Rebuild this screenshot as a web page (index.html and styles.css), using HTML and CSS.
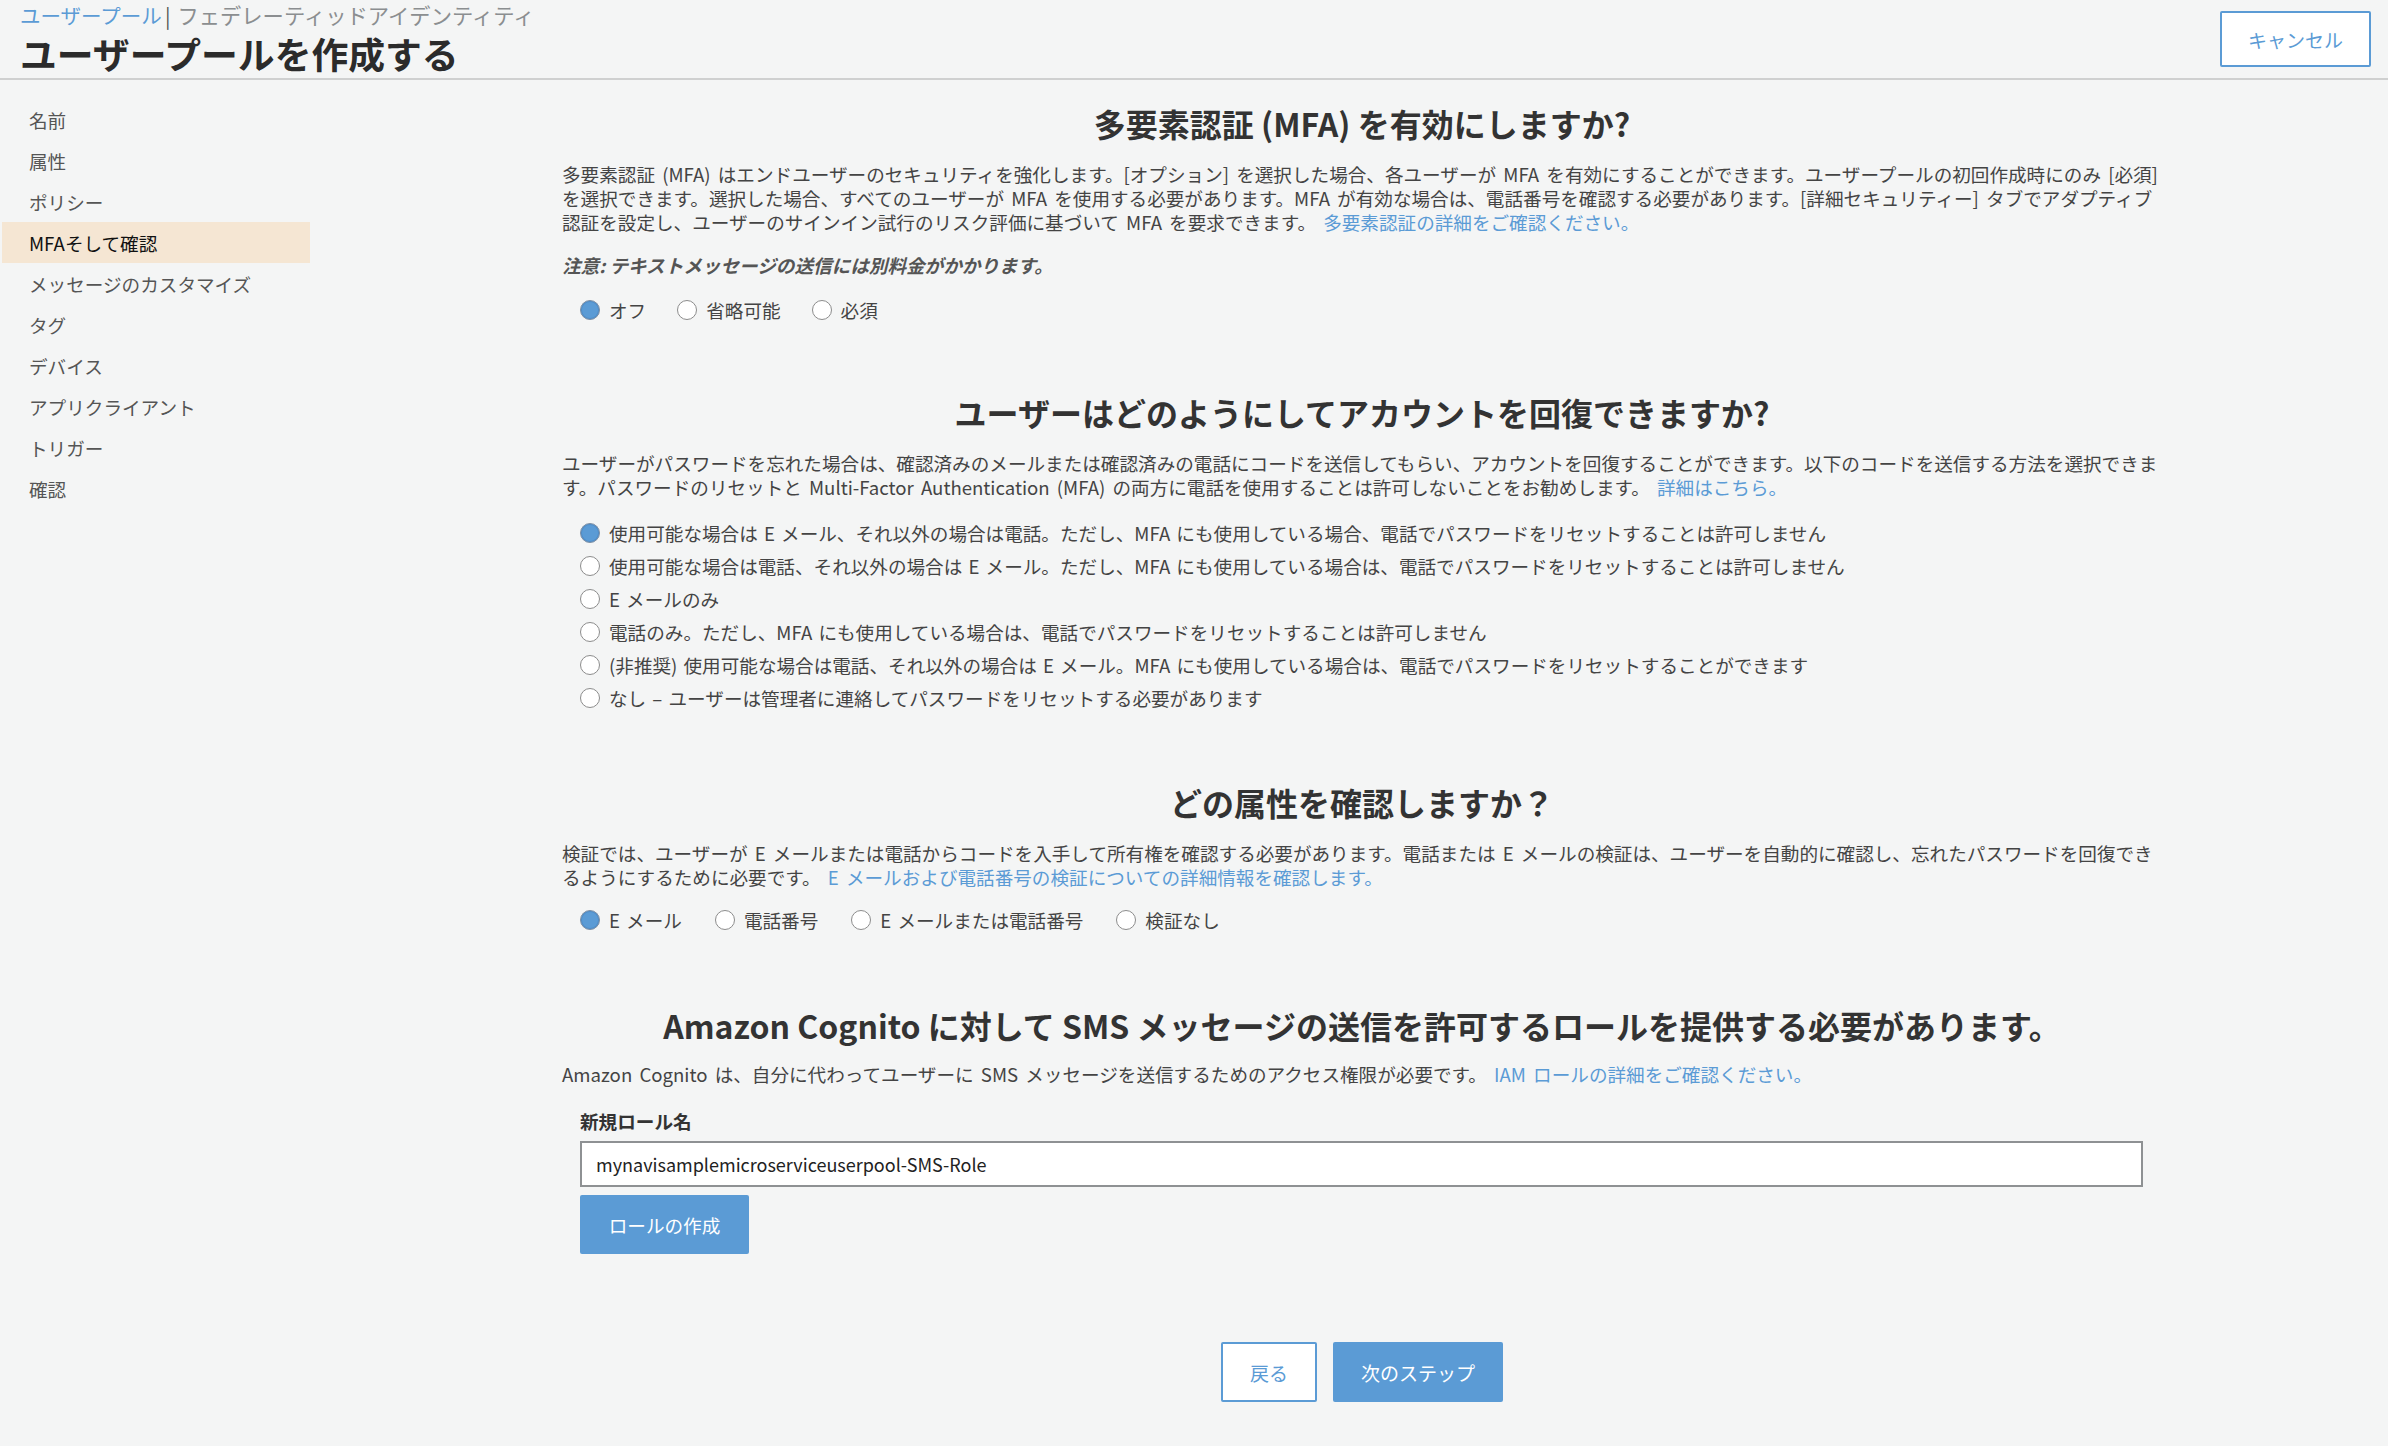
FILE: index.html
```html
<!DOCTYPE html>
<html lang="ja">
<head>
<meta charset="utf-8">
<title>ユーザープールを作成する</title>
<link rel="stylesheet" href="styles.css">
</head>
<body>
<header class="header">
  <div class="head-left">
    <div class="crumbs"><a href="#">ユーザープール</a><span class="sep">|</span><span class="crumb-grey">フェデレーティッドアイデンティティ</span></div>
    <h1 class="title">ユーザープールを作成する</h1>
  </div>
  <button class="cancel">キャンセル</button>
</header>
<div class="layout">
  <nav class="side">
    <a href="#">名前</a>
    <a href="#">属性</a>
    <a href="#">ポリシー</a>
    <a href="#" class="active">MFAそして確認</a>
    <a href="#">メッセージのカスタマイズ</a>
    <a href="#">タグ</a>
    <a href="#">デバイス</a>
    <a href="#">アプリクライアント</a>
    <a href="#">トリガー</a>
    <a href="#">確認</a>
  </nav>
  <main class="main">
    <section class="sec sec-mfa">
      <h2 class="sec-title">多要素認証 (MFA) を有効にしますか?</h2>
      <p class="desc">多要素認証 (MFA) はエンドユーザーのセキュリティを強化します。[オプション] を選択した場合、各ユーザーが MFA を有効にすることができます。ユーザープールの初回作成時にのみ [必須] を選択できます。選択した場合、すべてのユーザーが MFA を使用する必要があります。MFA が有効な場合は、電話番号を確認する必要があります。[詳細セキュリティー] タブでアダプティブ認証を設定し、ユーザーのサインイン試行のリスク評価に基づいて MFA を要求できます。 <a href="#">多要素認証の詳細をご確認ください。</a></p>
      <p class="note">注意: テキストメッセージの送信には別料金がかかります。</p>
      <div class="radio-row">
        <label class="radio"><span class="dot on"></span>オフ</label>
        <label class="radio"><span class="dot"></span>省略可能</label>
        <label class="radio"><span class="dot"></span>必須</label>
      </div>
    </section>

    <section class="sec sec-recover">
      <h2 class="sec-title">ユーザーはどのようにしてアカウントを回復できますか?</h2>
      <p class="desc">ユーザーがパスワードを忘れた場合は、確認済みのメールまたは確認済みの電話にコードを送信してもらい、アカウントを回復することができます。以下のコードを送信する方法を選択できます。パスワードのリセットと Multi-Factor Authentication (MFA) の両方に電話を使用することは許可しないことをお勧めします。 <a href="#">詳細はこちら。</a></p>
      <div class="radio-list">
        <label class="radio"><span class="dot on"></span>使用可能な場合は E メール、それ以外の場合は電話。ただし、MFA にも使用している場合、電話でパスワードをリセットすることは許可しません</label>
        <label class="radio"><span class="dot"></span>使用可能な場合は電話、それ以外の場合は E メール。ただし、MFA にも使用している場合は、電話でパスワードをリセットすることは許可しません</label>
        <label class="radio"><span class="dot"></span>E メールのみ</label>
        <label class="radio"><span class="dot"></span>電話のみ。ただし、MFA にも使用している場合は、電話でパスワードをリセットすることは許可しません</label>
        <label class="radio"><span class="dot"></span>(非推奨) 使用可能な場合は電話、それ以外の場合は E メール。MFA にも使用している場合は、電話でパスワードをリセットすることができます</label>
        <label class="radio"><span class="dot"></span>なし – ユーザーは管理者に連絡してパスワードをリセットする必要があります</label>
      </div>
    </section>

    <section class="sec sec-verify">
      <h2 class="sec-title">どの属性を確認しますか？</h2>
      <p class="desc">検証では、ユーザーが E メールまたは電話からコードを入手して所有権を確認する必要があります。電話または E メールの検証は、ユーザーを自動的に確認し、忘れたパスワードを回復できるようにするために必要です。 <a href="#">E メールおよび電話番号の検証についての詳細情報を確認します。</a></p>
      <div class="radio-row">
        <label class="radio"><span class="dot on"></span>E メール</label>
        <label class="radio"><span class="dot"></span>電話番号</label>
        <label class="radio"><span class="dot"></span>E メールまたは電話番号</label>
        <label class="radio"><span class="dot"></span>検証なし</label>
      </div>
    </section>

    <section class="sec sec-sms">
      <h2 class="sec-title">Amazon Cognito に対して SMS メッセージの送信を許可するロールを提供する必要があります。</h2>
      <p class="desc">Amazon Cognito は、自分に代わってユーザーに SMS メッセージを送信するためのアクセス権限が必要です。 <a href="#">IAM ロールの詳細をご確認ください。</a></p>
      <div class="field">
        <div class="field-label">新規ロール名</div>
        <input class="field-input" type="text" value="mynavisamplemicroserviceuserpool-SMS-Role">
        <button class="btn-primary btn-role">ロールの作成</button>
      </div>
    </section>

    <div class="actions">
      <button class="btn-outline">戻る</button>
      <button class="btn-primary btn-next">次のステップ</button>
    </div>
  </main>
</div>
</body>
</html>
```

FILE: styles.css
```css
* { box-sizing: border-box; }

body {
  margin: 0;
  background: #f4f5f5;
  font-family: "Noto Sans CJK JP", "Noto Sans", sans-serif;
  font-size: 18.6px;
  color: #444;
}

a { color: #5b9bd5; text-decoration: none; }

.header {
  display: flex;
  justify-content: space-between;
  align-items: flex-start;
  height: 80px;
  border-bottom: 2px solid #cfd0d0;
  padding: 0 17px 0 20px;
}

.crumbs {
  font-size: 20.5px;
  line-height: 24px;
  padding-top: 3px;
  color: #8b8e90;
}
.crumbs .sep { color: #555; margin: 0 7px 0 3px; }
.crumbs .crumb-grey { font-size: 21.3px; }

.title {
  margin: 4px 0 0;
  font-size: 36.8px;
  line-height: 44px;
  font-weight: 700;
  color: #2b2b2b;
}

.cancel {
  margin-top: 11px;
  width: 151px;
  height: 56px;
  border: 2px solid #5b9bd5;
  border-radius: 2px;
  background: #fff;
  color: #5b9bd5;
  font-family: inherit;
  font-size: 19px;
}

.layout { display: flex; }

.side {
  width: 308px;
  margin-left: 2px;
  padding-top: 19px;
  flex-shrink: 0;
}
.side a {
  display: block;
  height: 41px;
  line-height: 41px;
  padding-left: 27px;
  color: #555;
}
.side a.active { background: #f5e6d3; color: #111; }

.main {
  margin-left: 252px;
  width: 1600px;
  padding-top: 23px;
}

.sec-title {
  margin: 0;
  text-align: center;
  font-size: 32px;
  line-height: 40px;
  font-weight: 700;
  color: #333;
}

.desc {
  margin: 19px 0 0;
  line-height: 24px;
  color: #444;
  word-spacing: 3px;
}

.note {
  margin: 19px 0 0;
  line-height: 24px;
  font-weight: 700;
  font-style: italic;
  color: #555;
}

.radio-row {
  display: flex;
  gap: 31px;
  padding-left: 18px;
  margin-top: 21px;
}

.radio {
  display: flex;
  align-items: center;
  gap: 9px;
  line-height: 24px;
  color: #444;
  word-spacing: 2px;
}

.dot {
  width: 20px;
  height: 20px;
  border-radius: 50%;
  border: 1.5px solid #8c8c8c;
  background: #fff;
  flex-shrink: 0;
}
.dot.on {
  background: #5b9bd5;
  border: 1.5px solid #7f8fa3;
  box-shadow: inset 0 0 0 1px #4d8cc9;
}

.radio-list {
  margin-top: 17px;
  padding-left: 18px;
  display: flex;
  flex-direction: column;
}
.radio-list .radio { height: 33px; }

.sec-recover { margin-top: 70px; }
.sec-verify { margin-top: 68px; }
.sec-verify .radio-row { margin-top: 19px; gap: 33px; }
.sec-sms { margin-top: 73px; }
.sec-sms .desc { margin-top: 17px; }

.field { padding-left: 18px; margin-top: 23px; }
.field-label {
  font-weight: 700;
  line-height: 24px;
  color: #333;
}
.field-input {
  display: block;
  margin-top: 8px;
  width: 1563px;
  height: 46px;
  border: 2px solid #8e9193;
  background: #fff;
  padding: 0 14px;
  font-family: "Noto Sans CJK JP", sans-serif;
  font-size: 18px;
  color: #222;
}

.btn-primary {
  border: 0;
  border-radius: 2px;
  background: #5b9bd5;
  color: #fff;
  font-family: inherit;
  font-size: 18.6px;
}
.btn-role {
  display: block;
  margin-top: 8px;
  width: 169px;
  height: 59px;
}

.actions {
  display: flex;
  justify-content: center;
  gap: 16px;
  margin-top: 88px;
  padding-bottom: 40px;
}
.btn-outline {
  width: 96px;
  height: 60px;
  border: 2px solid #5b9bd5;
  border-radius: 2px;
  background: #fff;
  color: #5b9bd5;
  font-family: inherit;
  font-size: 19px;
}
.btn-next { width: 170px; height: 60px; font-size: 19px; }
```
